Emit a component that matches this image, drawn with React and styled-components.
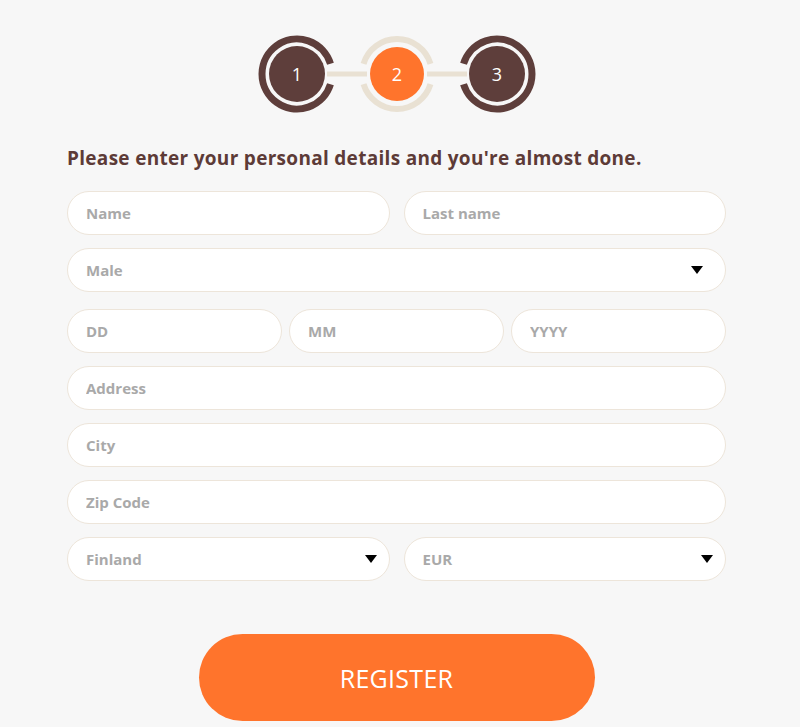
import React from "react";
import styled, { createGlobalStyle } from "styled-components";

const Global = createGlobalStyle`
  html, body { margin: 0; padding: 0; background: #f7f7f7; }
  body { font-family: "Open Sans", "Liberation Sans", sans-serif; }
  * { box-sizing: border-box; }
`;

const Page = styled.div`
  width: 800px;
  min-height: 727px;
  background: #f7f7f7;
  padding-top: 32px;
`;

const Stepper = styled.svg`
  display: block;
  margin-left: 247px;
  width: 300px;
  height: 84px;
`;

const Form = styled.form`
  width: 659px;
  margin-left: 67px;
  display: flex;
  flex-direction: column;
`;

const Heading = styled.h2`
  margin: 29px 0 20px;
  font-family: "Open Sans", "Liberation Sans", sans-serif;
  font-weight: 700;
  font-size: 19px;
  line-height: 26px;
  color: #5d3b37;
  letter-spacing: 0.3px;
`;

const Row = styled.div`
  display: grid;
  grid-template-columns: repeat(${(p) => p.$cols || 1}, 1fr);
  column-gap: ${(p) => p.$gap || 14}px;
  margin-bottom: ${(p) => p.$mb ?? 13}px;
`;

const Field = styled.input`
  height: 44px;
  width: 100%;
  border: 1px solid #ede5da;
  border-radius: 22px;
  background: #fff;
  padding: 0 18px;
  font-family: "Open Sans", "Liberation Sans", sans-serif;
  font-weight: 700;
  font-size: 15px;
  color: #555;
  outline: none;
  &::placeholder { color: #a9a9a9; opacity: 1; }
`;

const Select = styled.div`
  height: 44px;
  border: 1px solid #ede5da;
  border-radius: 22px;
  background: #fff;
  padding: 0 ${(p) => p.$pr || 22}px 0 18px;
  display: flex;
  align-items: center;
  justify-content: space-between;
  font-weight: 700;
  font-size: 15px;
  color: #a9a9a9;
`;

const Caret = styled.span`
  width: 0;
  height: 0;
  border-left: 6px solid transparent;
  border-right: 6px solid transparent;
  border-top: 8px solid #000;
`;

const Button = styled.button`
  align-self: center;
  margin-top: 53px;
  width: 396px;
  height: 87px;
  border: none;
  border-radius: 44px;
  background: #ff742c;
  color: #fff;
  font-family: "Open Sans", "Liberation Sans", sans-serif;
  font-size: 25px;
  font-weight: 400;
  letter-spacing: 0.3px;
`;

const polar = (cx, cy, r, deg) => {
  const a = (deg * Math.PI) / 180;
  return [cx + r * Math.cos(a), cy + r * Math.sin(a)];
};
const arc = (cx, cy, r, from, to) => {
  const [x1, y1] = polar(cx, cy, r, from);
  const [x2, y2] = polar(cx, cy, r, to);
  const large = (to - from + 360) % 360 > 180 ? 1 : 0;
  return `M${x1} ${y1} A${r} ${r} 0 ${large} 1 ${x2} ${y2}`;
};

const DARK = "#5e3e3b";
const BEIGE = "#e9e1d3";
const ORANGE = "#ff742c";

function StepNum({ x, children }) {
  return (
    <text x={x} y={48.5} textAnchor="middle" fill="#fff" fontFamily="Open Sans, Liberation Sans, sans-serif" fontSize="18">
      {children}
    </text>
  );
}

export default function App() {
  return (
    <Page>
      <Global />
      <Stepper viewBox="0 0 300 84">
        <rect x="80" y="39.5" width="40" height="5" fill={BEIGE} />
        <rect x="180" y="39.5" width="40" height="5" fill={BEIGE} />
        <path d={arc(50, 42, 35, 17, 343)} stroke={DARK} strokeWidth="7" fill="none" />
        <circle cx="50" cy="42" r="28" fill={DARK} />
        <StepNum x={50}>1</StepNum>
        <path d={arc(150, 42, 35, 17, 163)} stroke={BEIGE} strokeWidth="6" fill="none" />
        <path d={arc(150, 42, 35, 197, 343)} stroke={BEIGE} strokeWidth="6" fill="none" />
        <circle cx="150" cy="42" r="27" fill={ORANGE} />
        <StepNum x={150}>2</StepNum>
        <path d={arc(250, 42, 35, 197, 523)} stroke={DARK} strokeWidth="7" fill="none" />
        <circle cx="250" cy="42" r="28" fill={DARK} />
        <StepNum x={250}>3</StepNum>
      </Stepper>
      <Form onSubmit={(e) => e.preventDefault()}>
        <Heading>Please enter your personal details and you're almost done.</Heading>
        <Row $cols={2}>
          <Field placeholder="Name" />
          <Field placeholder="Last name" />
        </Row>
        <Row $mb={17}>
          <Select>Male<Caret /></Select>
        </Row>
        <Row $cols={3} $gap={7}>
          <Field placeholder="DD" />
          <Field placeholder="MM" />
          <Field placeholder="YYYY" />
        </Row>
        <Row>
          <Field placeholder="Address" />
        </Row>
        <Row>
          <Field placeholder="City" />
        </Row>
        <Row>
          <Field placeholder="Zip Code" />
        </Row>
        <Row $cols={2} $mb={0}>
          <Select $pr={12}>Finland<Caret /></Select>
          <Select $pr={12}>EUR<Caret /></Select>
        </Row>
        <Button type="submit">REGISTER</Button>
      </Form>
    </Page>
  );
}
